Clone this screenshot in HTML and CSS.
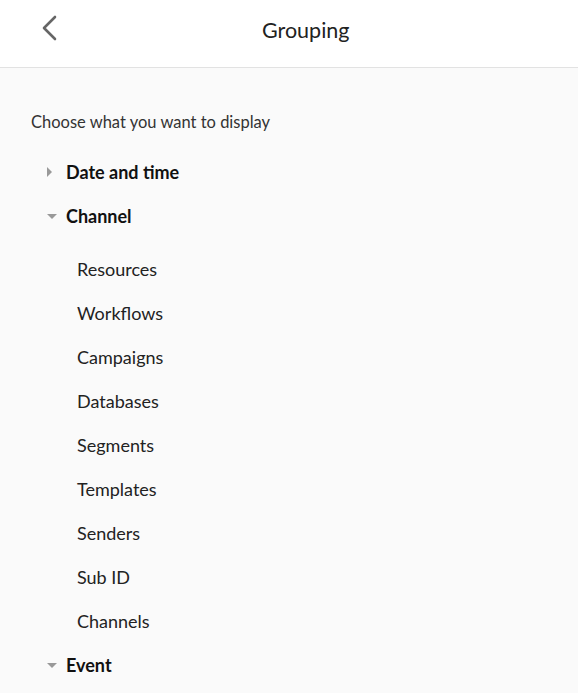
FILE: index.html
```html
<!DOCTYPE html>
<html lang="en">
<head>
  <meta charset="UTF-8">
  <title>Grouping</title>
  <link rel="stylesheet" href="styles.css">
</head>
<body>
  <header class="topbar">
    <button class="back" aria-label="Back">
      <svg width="16" height="26" viewBox="0 0 16 26"><path d="M14 2 L3 13 L14 24" fill="none" stroke="#666" stroke-width="2.6" stroke-linecap="round" stroke-linejoin="round"/></svg>
    </button>
    <h1 class="title">Grouping</h1>
  </header>

  <main class="content">
    <p class="intro">Choose what you want to display</p>

    <div class="group">
      <div class="group-head"><span class="caret closed"></span>Date and time</div>
    </div>

    <div class="group">
      <div class="group-head"><span class="caret open"></span>Channel</div>
      <ul class="items">
        <li>Resources</li>
        <li>Workflows</li>
        <li>Campaigns</li>
        <li>Databases</li>
        <li>Segments</li>
        <li>Templates</li>
        <li>Senders</li>
        <li>Sub ID</li>
        <li>Channels</li>
      </ul>
    </div>

    <div class="group">
      <div class="group-head"><span class="caret open"></span>Event</div>
    </div>
  </main>
</body>
</html>
```

FILE: styles.css
```css
body {
  margin: 0;
  font-family: 'Lato', sans-serif;
  background: #fafafa;
  color: #222;
}
.topbar {
  height: 67px;
  background: #fff;
  border-bottom: 1px solid #e2e2e2;
  display: flex;
  align-items: flex-start;
  position: relative;
}
.back {
  position: absolute;
  left: 39px;
  top: 15px;
  border: none;
  background: none;
  padding: 0;
  width: 20px;
  height: 28px;
}
.title {
  margin: 17px 0 0 262px;
  font-size: 21.5px;
  line-height: 26px;
  font-weight: 400;
  color: #222;
}
.content {
  padding: 0 31px;
}
.intro {
  margin: 0;
  padding-top: 44px;
  font-size: 16.5px;
  line-height: 20px;
  color: #333;
}
.group-head {
  display: flex;
  align-items: center;
  height: 44px;
  font-size: 18px;
  font-weight: 700;
  color: #111;
}
.group:first-of-type .group-head {
  margin-top: 18px;
}
.caret {
  width: 35px;
  display: flex;
  justify-content: flex-start;
  padding-left: 16px;
  box-sizing: border-box;
}
.caret::before {
  content: "";
  display: block;
  border-style: solid;
}
.caret.closed::before {
  border-width: 5px 0 5px 5px;
  border-color: transparent transparent transparent #999;
}
.caret.open::before {
  border-width: 5px 5px 0 5px;
  border-color: #999 transparent transparent transparent;
}
.items {
  list-style: none;
  margin: 9px 0 0;
  padding: 0 0 0 46px;
}
.items li {
  height: 44px;
  line-height: 44px;
  font-size: 18px;
  color: #222;
}
```
